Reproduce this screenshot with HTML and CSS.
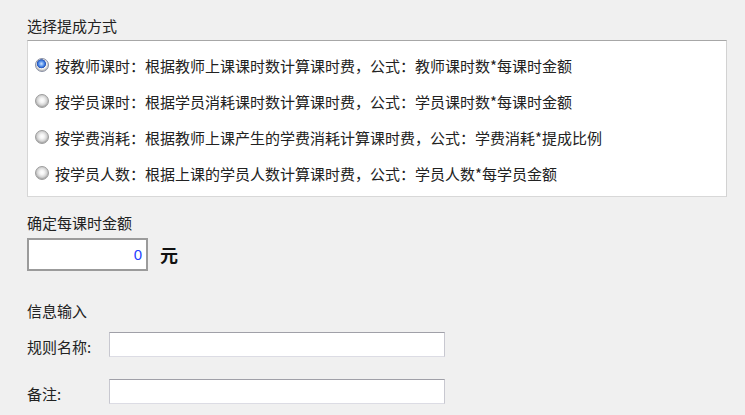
FILE: index.html
```html
<!DOCTYPE html>
<html lang="zh-CN">
<head>
<meta charset="utf-8">
<title>提成方式</title>
<link rel="stylesheet" href="styles.css">
</head>
<body>
<div class="page">
  <div class="section-title">选择提成方式</div>
  <div class="choice-box">
    <label class="choice"><span class="radio checked"></span><span class="choice-text">按教师课时：根据教师上课课时数计算课时费，公式：教师课时数*每课时金额</span></label>
    <label class="choice"><span class="radio"></span><span class="choice-text">按学员课时：根据学员消耗课时数计算课时费，公式：学员课时数*每课时金额</span></label>
    <label class="choice"><span class="radio"></span><span class="choice-text">按学费消耗：根据教师上课产生的学费消耗计算课时费，公式：学费消耗*提成比例</span></label>
    <label class="choice"><span class="radio"></span><span class="choice-text">按学员人数：根据上课的学员人数计算课时费，公式：学员人数*每学员金额</span></label>
  </div>

  <div class="section-title amount-title">确定每课时金额</div>
  <div class="amount-row">
    <div class="amount-input">0</div>
    <span class="unit">元</span>
  </div>

  <div class="section-title info-title">信息输入</div>
  <div class="field-row">
    <span class="field-label">规则名称:</span>
    <div class="text-input"></div>
  </div>
  <div class="field-row second">
    <span class="field-label">备注:</span>
    <div class="text-input"></div>
  </div>
</div>
</body>
</html>
```

FILE: styles.css
```css
html, body {
  margin: 0;
  padding: 0;
  background: #f0f0f0;
}

body {
  font-family: "Noto Sans CJK SC", "Microsoft YaHei", sans-serif;
  font-size: 15px;
  color: #222;
}

.page {
  padding: 16px 0 0 27px;
  width: 700px;
}

.section-title {
  line-height: 20px;
  height: 20px;
}

.choice-box {
  margin-top: 4px;
  background: #fff;
  border-top: 1px solid #a7a7a7;
  border-left: 1px solid #d6d6d6;
  border-right: 1px solid #d2d2d2;
  border-bottom: 1px solid #d8d8d8;
  padding: 7px 0 4px 7px;
  box-sizing: border-box;
  height: 157px;
}

.choice {
  display: flex;
  align-items: center;
  height: 36px;
}

.radio {
  width: 14px;
  height: 14px;
  border-radius: 50%;
  box-sizing: border-box;
  border: 1px solid #9c9c9c;
  background: radial-gradient(circle at 50% 45%, #ffffff 0, #f4f4f4 25%, #d2d2d2 55%, #a8a8a8 100%);
  box-shadow: inset 0 -1px 1px rgba(0,0,0,0.15);
  margin-right: 6px;
  flex: none;
  position: relative;
  top: -1px;
}

.radio.checked {
  border-color: #8a90a4;
  background:
    radial-gradient(circle at 45% 40%, #cfe3ff 0, #5a95ec 25%, #2458c4 42%, #6f87b8 46%, transparent 49%),
    radial-gradient(circle at 50% 45%, #ffffff 0, #f0f0f0 50%, #c8c8c8 80%, #aeaeae 100%);
}

.choice-text {
  line-height: 20px;
  white-space: nowrap;
}

.amount-title {
  margin-top: 16px;
}

.amount-row {
  display: flex;
  align-items: center;
  margin-top: 5px;
}

.amount-input {
  width: 121px;
  height: 33px;
  box-sizing: border-box;
  border: 2px solid #9b9b9b;
  background: #fff;
  color: #1f3fff;
  font-family: "Liberation Sans", Arial, sans-serif;
  font-size: 15px;
  text-align: right;
  line-height: 29px;
  padding-right: 4px;
}

.unit {
  margin-left: 12px;
  font-size: 18px;
  font-weight: bold;
  color: #111;
  line-height: 20px;
  position: relative;
  top: -1px;
}

.info-title {
  margin-top: 30px;
}

.field-row {
  display: flex;
  align-items: center;
  margin-top: 11px;
}

.field-row.second {
  margin-top: 22px;
}

.field-label {
  width: 82px;
  flex: none;
  line-height: 20px;
  position: relative;
  top: 2px;
}

.text-input {
  width: 336px;
  height: 25px;
  box-sizing: border-box;
  background: #fff;
  border-top: 1px solid #a0a0a8;
  border-left: 1px solid #c8c8d0;
  border-right: 1px solid #c8c8d0;
  border-bottom: 1px solid #dcdce4;
}
```
